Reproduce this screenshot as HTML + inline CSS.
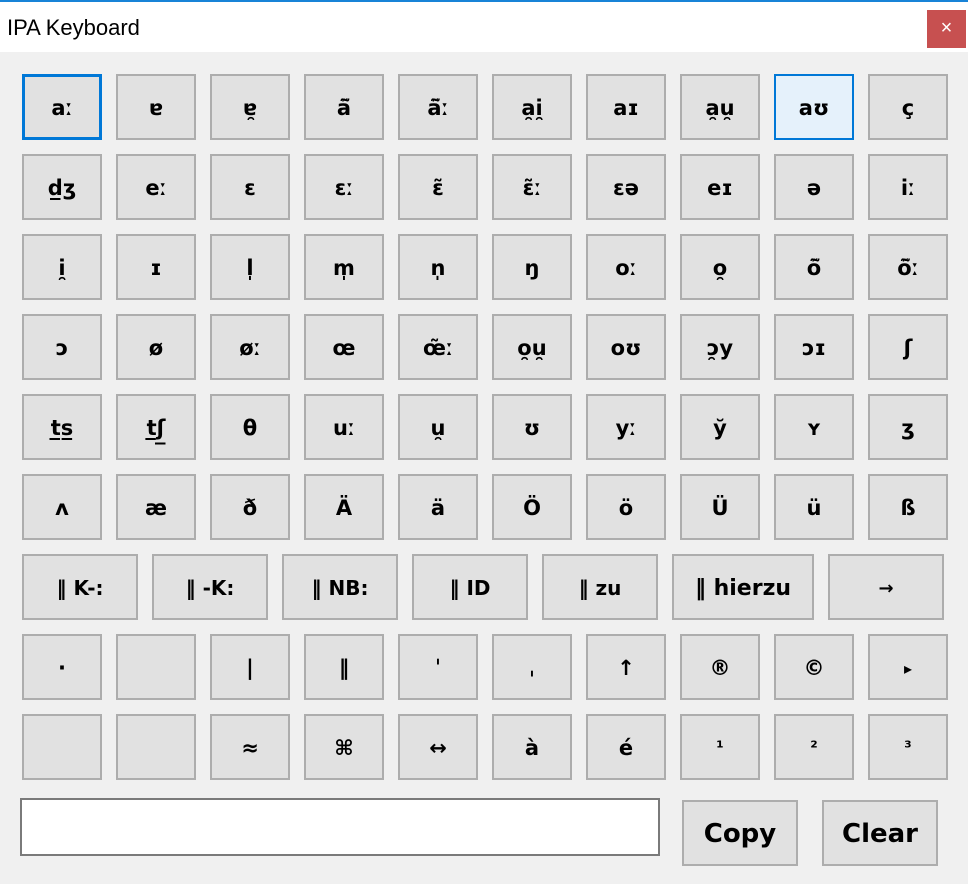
<!DOCTYPE html>
<html><head><meta charset="utf-8"><style>
*{margin:0;padding:0;box-sizing:border-box}
body{width:968px;height:884px;background:#f0f0f0;position:relative;overflow:hidden;font-family:"DejaVu Sans","Liberation Sans",sans-serif}
.tb{position:absolute;left:0;top:0;width:968px;height:52px;background:#fff;border-top:2px solid #1883d7}
.tt{position:absolute;left:7px;top:13px;font:22px "Liberation Sans",sans-serif;color:#000}
.cl{position:absolute;left:927px;top:8px;width:39px;height:38px;background:#c75050;color:#fff;font:20px "Liberation Sans",sans-serif;text-align:center;line-height:37px}
.b{position:absolute;width:80px;height:66px;background:#e1e1e1;border:2px solid #adadad;display:flex;align-items:center;justify-content:center;font-weight:bold;font-size:21px;color:#000;white-space:nowrap;padding-top:2px}
.f{border-color:#0078d7;border-width:3px}
.h{background:#e5f1fb;border-color:#0078d7;border-width:2px}
.s{font-size:17px}
.in{position:absolute;left:20px;top:798px;width:640px;height:58px;background:#fff;border:2px solid #7a7a7a}
</style></head><body>
<div class="tb"><div class="tt">IPA Keyboard</div><div class="cl">×</div></div>
<div class="b f" style="left:22px;top:74px">aː</div><div class="b" style="left:116px;top:74px">ɐ</div><div class="b" style="left:210px;top:74px">ɐ̯</div><div class="b" style="left:304px;top:74px">ã̃</div><div class="b" style="left:398px;top:74px">ã̃ː</div><div class="b" style="left:492px;top:74px">a̯i̯</div><div class="b" style="left:586px;top:74px">aɪ</div><div class="b" style="left:680px;top:74px">a̯u̯</div><div class="b h" style="left:774px;top:74px">aʊ</div><div class="b" style="left:868px;top:74px">ç</div>
<div class="b" style="left:22px;top:154px">d̲ʒ</div><div class="b" style="left:116px;top:154px">eː</div><div class="b" style="left:210px;top:154px">ɛ</div><div class="b" style="left:304px;top:154px">ɛː</div><div class="b" style="left:398px;top:154px">ɛ̃̃</div><div class="b" style="left:492px;top:154px">ɛ̃̃ː</div><div class="b" style="left:586px;top:154px">ɛə</div><div class="b" style="left:680px;top:154px">eɪ</div><div class="b" style="left:774px;top:154px">ə</div><div class="b" style="left:868px;top:154px">iː</div>
<div class="b" style="left:22px;top:234px">i̯</div><div class="b" style="left:116px;top:234px">ɪ</div><div class="b" style="left:210px;top:234px">l̩</div><div class="b" style="left:304px;top:234px">m̩</div><div class="b" style="left:398px;top:234px">n̩</div><div class="b" style="left:492px;top:234px">ŋ</div><div class="b" style="left:586px;top:234px">oː</div><div class="b" style="left:680px;top:234px">o̯</div><div class="b" style="left:774px;top:234px">õ̃</div><div class="b" style="left:868px;top:234px">õ̃ː</div>
<div class="b" style="left:22px;top:314px">ɔ</div><div class="b" style="left:116px;top:314px">ø</div><div class="b" style="left:210px;top:314px">øː</div><div class="b" style="left:304px;top:314px">œ</div><div class="b" style="left:398px;top:314px">œ̃̃ː</div><div class="b" style="left:492px;top:314px">o̯u̯</div><div class="b" style="left:586px;top:314px">oʊ</div><div class="b" style="left:680px;top:314px">ɔ̯y</div><div class="b" style="left:774px;top:314px">ɔɪ</div><div class="b" style="left:868px;top:314px">ʃ</div>
<div class="b" style="left:22px;top:394px">t̲s̲</div><div class="b" style="left:116px;top:394px">t̲ʃ̲</div><div class="b" style="left:210px;top:394px">θ</div><div class="b" style="left:304px;top:394px">uː</div><div class="b" style="left:398px;top:394px">u̯</div><div class="b" style="left:492px;top:394px">ʊ</div><div class="b" style="left:586px;top:394px">yː</div><div class="b" style="left:680px;top:394px">y̆</div><div class="b" style="left:774px;top:394px">ʏ</div><div class="b" style="left:868px;top:394px">ʒ</div>
<div class="b" style="left:22px;top:474px">ʌ</div><div class="b" style="left:116px;top:474px">æ</div><div class="b" style="left:210px;top:474px">ð</div><div class="b" style="left:304px;top:474px">Ä</div><div class="b" style="left:398px;top:474px">ä</div><div class="b" style="left:492px;top:474px">Ö</div><div class="b" style="left:586px;top:474px">ö</div><div class="b" style="left:680px;top:474px">Ü</div><div class="b" style="left:774px;top:474px">ü</div><div class="b" style="left:868px;top:474px">ß</div>
<div class="b" style="left:22px;top:554px;width:116px;font-size:20px">‖ K-:</div><div class="b" style="left:152px;top:554px;width:116px;font-size:20px">‖ -K:</div><div class="b" style="left:282px;top:554px;width:116px;font-size:20px">‖ NB:</div><div class="b" style="left:412px;top:554px;width:116px;font-size:20px">‖ ID</div><div class="b" style="left:542px;top:554px;width:116px;font-size:20px">‖ zu</div><div class="b" style="left:672px;top:554px;width:142px;font-size:22px">‖ hierzu</div><div class="b" style="left:828px;top:554px;width:116px;font-size:18px">→</div>
<div class="b" style="left:22px;top:634px">·</div><div class="b" style="left:116px;top:634px"></div><div class="b" style="left:210px;top:634px">|</div><div class="b" style="left:304px;top:634px">‖</div><div class="b" style="left:398px;top:634px">ˈ</div><div class="b" style="left:492px;top:634px">ˌ</div><div class="b" style="left:586px;top:634px">↑</div><div class="b" style="left:680px;top:634px">®</div><div class="b" style="left:774px;top:634px">©</div><div class="b" style="left:868px;top:634px;font-size:16px">▸</div>
<div class="b" style="left:22px;top:714px"></div><div class="b" style="left:116px;top:714px"></div><div class="b" style="left:210px;top:714px">≈</div><div class="b" style="left:304px;top:714px">⌘</div><div class="b" style="left:398px;top:714px">↔</div><div class="b" style="left:492px;top:714px">à</div><div class="b" style="left:586px;top:714px">é</div><div class="b s" style="left:680px;top:714px">¹</div><div class="b s" style="left:774px;top:714px">²</div><div class="b s" style="left:868px;top:714px">³</div>
<div class="in"></div>
<div class="b" style="left:682px;top:800px;width:116px;height:66px;font-size:26px">Copy</div>
<div class="b" style="left:822px;top:800px;width:116px;height:66px;font-size:26px">Clear</div>
</body></html>
